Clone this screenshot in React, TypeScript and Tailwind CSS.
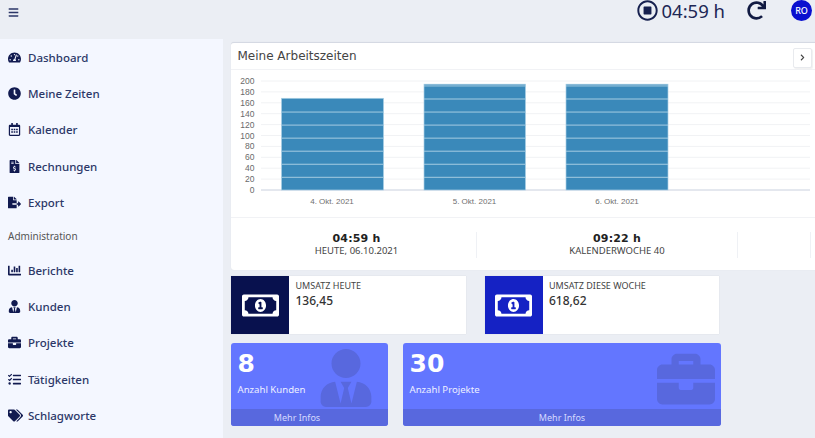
import React from "react";
import {
  FaBars, FaTachometerAlt, FaClock, FaRegCalendarAlt, FaFileInvoiceDollar, FaFileExport,
  FaChartBar, FaUserTie, FaBriefcase, FaTasks, FaTags, FaRegMoneyBillAlt, FaRegStopCircle, FaRedo, FaChevronRight,
} from "react-icons/fa";

const noto = "font-['Noto_Sans','Open_Sans',sans-serif]";
const deja = "font-['DejaVu_Sans',sans-serif]";

function Item({ icon: Icon, label, size = 13 }: { icon: any; label: string; size?: number }) {
  return (
    <div className="flex h-[36.4px] items-center pl-2">
      <span className="flex w-5 items-center">
        <Icon size={size} className="text-[#111a50]" />
      </span>
      <span className="text-[11.5px] font-medium text-[#2c3768]">{label}</span>
    </div>
  );
}

function Chart() {
  const yTicks = [0, 20, 40, 60, 80, 100, 120, 140, 160, 180, 200];
  const bars = [
    { x: 281.5, w: 102, top: 98.3 },
    { x: 424, w: 101.5, top: 84.2 },
    { x: 566, w: 102, top: 84.2 },
  ];
  const labels = [
    { x: 332, t: "4. Okt. 2021" },
    { x: 474.5, t: "5. Okt. 2021" },
    { x: 617, t: "6. Okt. 2021" },
  ];
  return (
    <svg width="584" height="147" viewBox="231 70 584 147" className="block">
      {yTicks.map((v, i) => {
        const y = 190 - i * 10.9;
        return (
          <g key={v}>
            <line x1={261} x2={810} y1={y} y2={y} stroke={v === 0 ? "#c9d0de" : "#f1f2f4"} strokeWidth="1" />
            <text x={254.5} y={y + 3} textAnchor="end" fontSize="8.5" fill="#6a6a6a" fontFamily="Liberation Sans">{v}</text>
          </g>
        );
      })}
      {bars.map((b, i) => {
        const lines: number[] = [];
        for (let y = 177.3; y > b.top + 1; y -= 13.05) lines.push(y);
        return (
          <g key={i}>
            <rect x={b.x} y={b.top} width={b.w} height={190 - b.top} fill="#3a89ba" stroke="#a9cfe4" strokeWidth="0.7" />
            {lines.map((y) => (
              <line key={y} x1={b.x} x2={b.x + b.w} y1={y} y2={y} stroke="#a5cce2" strokeWidth="1" />
            ))}
          </g>
        );
      })}
      {labels.map((l) => (
        <text key={l.t} x={l.x} y={204} textAnchor="middle" fontSize="8" fill="#6f6f6f" fontFamily="Liberation Sans">{l.t}</text>
      ))}
    </svg>
  );
}

function Stat({ value, label, className = "" }: { value: string; label: string; className?: string }) {
  return (
    <div className={"flex flex-col items-center border-r border-[#eff1f5] " + className}>
      <div className={deja + " text-[11px] leading-[13px] font-bold tracking-[0.2px] text-[#222]"}>{value}</div>
      <div className="text-[9.5px] leading-[12px] text-[#444]">{label}</div>
    </div>
  );
}

function Info({ color, label, value }: { color: string; label: string; value: string }) {
  return (
    <div className="flex h-[58px] w-[234.5px] bg-white shadow-[0_0_1px_rgba(0,0,0,0.12)]">
      <div className={"flex w-[58px] items-center justify-center " + color}>
        <FaRegMoneyBillAlt size={37} className="text-white" />
      </div>
      <div className="pl-[6.5px] pt-[3px]">
        <div className="text-[9px] leading-[14px] text-[#444]">{label}</div>
        <div className="text-[12px] leading-[16px] font-medium text-[#333]">{value}</div>
      </div>
    </div>
  );
}

function Tile({ value, label, w, icon, footerPad = "" }: { value: string; label: string; w: string; icon: React.ReactNode; footerPad?: string }) {
  return (
    <div className={"relative flex h-[83px] flex-col overflow-hidden rounded-[3px] bg-[#6376ff] " + w}>
      {icon}
      <div className="relative flex-1 px-[6.5px] pt-[4px]">
        <div className={deja + " text-[25px] leading-[34px] font-bold text-white"}>{value}</div>
        <div className="mt-[2px] text-[9.6px] leading-[14px] text-[#eef0ff]">{label}</div>
      </div>
      <div className={"relative flex h-[17px] items-center justify-center bg-[#5868de] text-[9px] text-[#d5d9ff] " + footerPad}>Mehr Infos</div>
    </div>
  );
}

export default function App() {
  return (
    <div className={"flex h-[438px] w-[815px] flex-col overflow-hidden bg-[#ebeef4] " + noto}>
      <header className="flex h-[39px] items-start justify-between">
        <div className="pl-2 pt-[7px]">
          <FaBars size={11} className="text-[#2c3768]" />
        </div>
        <div className="flex h-[21px] items-center">
          <FaRegStopCircle size={21} className="text-[#16204f]" />
          <span className="ml-[3px] text-[18.5px] leading-[21px] text-[#1d2754]">04:59 h</span>
          <FaRedo size={19} className="ml-[22px] text-[#111a42]" />
          <span className="ml-[25px] mr-[3px] flex h-[21px] w-[21px] items-center justify-center rounded-full bg-[#0a10cf] text-[9px] font-medium text-white">RO</span>
        </div>
      </header>
      <div className="flex flex-1">
        <aside className="w-[223px] bg-[#f4f7ff]">
          <Item icon={FaTachometerAlt} label="Dashboard" />
          <Item icon={FaClock} label="Meine Zeiten" />
          <Item icon={FaRegCalendarAlt} label="Kalender" />
          <Item icon={FaFileInvoiceDollar} label="Rechnungen" />
          <Item icon={FaFileExport} label="Export" />
          <div className="flex h-[31px] items-center pl-2 text-[10px] text-[#555]">Administration</div>
          <Item icon={FaChartBar} label="Berichte" />
          <Item icon={FaUserTie} label="Kunden" />
          <Item icon={FaBriefcase} label="Projekte" />
          <Item icon={FaTasks} label="Tätigkeiten" />
          <Item icon={FaTags} label="Schlagworte" size={15} />
        </aside>
        <main className="flex-1 pl-2 pt-[3px]">
          <section className="h-[228px] rounded-tl-[3px] rounded-bl-[3px] border-t border-[#d5d9e3] bg-white shadow-[0_0_1px_rgba(0,0,0,0.1)]">
            <div className="flex h-[27px] items-center justify-between border-b border-[#f1f2f5] pl-[6.5px] pr-[3px]">
              <span className={deja + " text-[12px] text-[#444]"}>Meine Arbeitszeiten</span>
              <button className="mt-[3px] flex h-5 w-[19px] items-center justify-center rounded-[2px] border border-[#e8eaee] bg-white shadow-[1px_1px_1px_rgba(0,0,0,0.06)]">
                <FaChevronRight size={7} className="text-[#444]" />
              </button>
            </div>
            <Chart />
            <div className="flex h-[52px] items-center border-t border-[#f1f2f5] pt-[2px]">
              <Stat value="04:59 h" label="HEUTE, 06.10.2021" className="ml-[6px] h-[26px] w-[240px]" />
              <Stat value="09:22 h" label="KALENDERWOCHE 40" className="h-[26px] w-[261px] pl-[20px]" />
              <div className="h-[26px] w-[73px] border-r border-[#eff1f5]" />
            </div>
          </section>
          <div className="mt-[6px] flex gap-[19px]">
            <Info color="bg-[#08114e]" label="UMSATZ HEUTE" value="136,45" />
            <Info color="bg-[#1522c4]" label="UMSATZ DIESE WOCHE" value="618,62" />
          </div>
          <div className="mt-[9px] flex gap-[15px]">
            <Tile
              value="8"
              label="Anzahl Kunden"
              w="w-[157px]"
              footerPad="pr-[25px]"
              icon={<FaUserTie size={58} className="absolute right-[13px] top-[6px] text-[#5868de]" />}
            />
            <Tile
              value="30"
              label="Anzahl Projekte"
              w="w-[318px]"
              icon={<FaBriefcase size={58} className="absolute right-[6px] top-[6.5px] text-[#5868de]" />}
            />
          </div>
        </main>
      </div>
    </div>
  );
}
